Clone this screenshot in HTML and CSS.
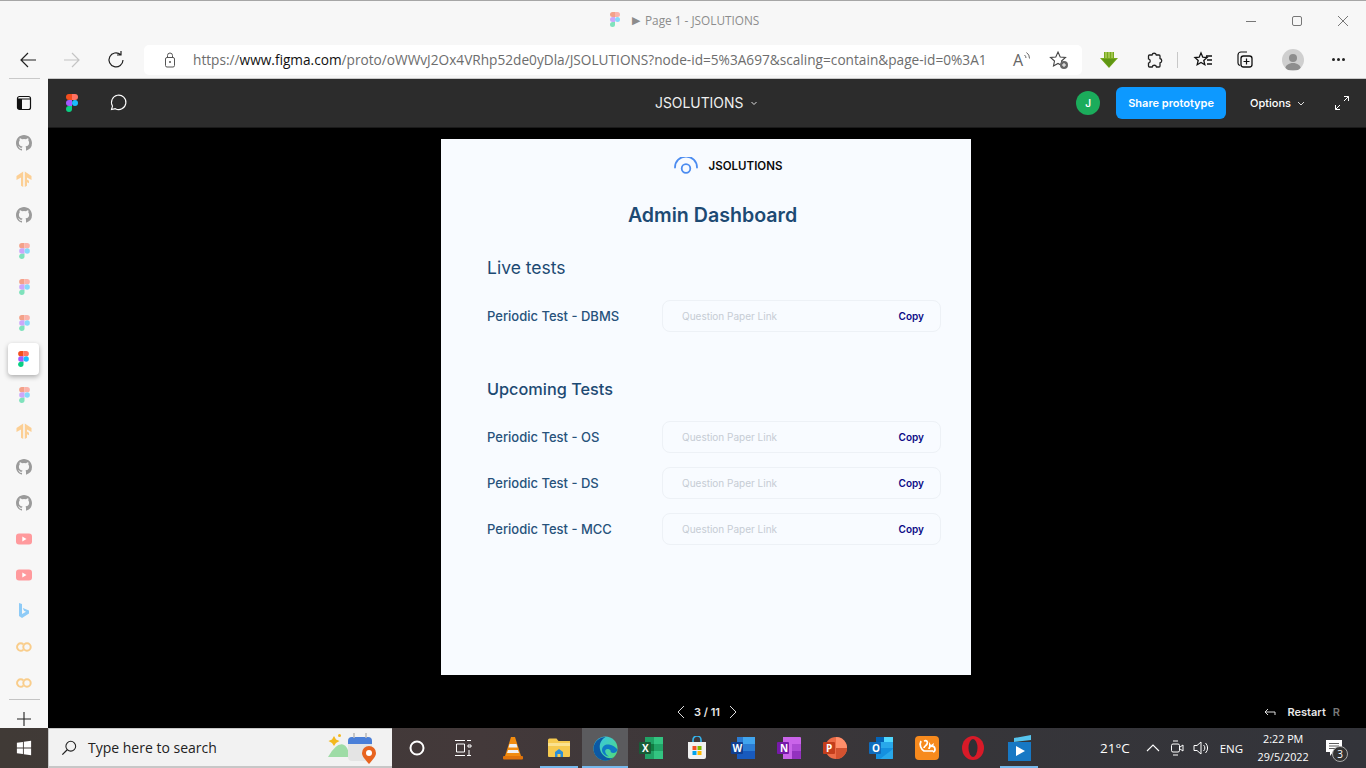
FILE: index.html
```html
<!DOCTYPE html>
<html lang="en">
<head>
    <meta charset="UTF-8">
    <title>Page 1 - JSOLUTIONS</title>
    <link rel="stylesheet" href="styles.css">
</head>
<body>
<svg class="defs" width="0" height="0">
    <symbol id="gh" viewBox="0 0 16 16"><path fill="#9b9b9b" d="M8 0C3.58 0 0 3.58 0 8c0 3.54 2.29 6.53 5.47 7.59.4.07.55-.17.55-.38v-1.34c-2.23.48-2.7-1.07-2.7-1.07-.36-.92-.89-1.17-.89-1.17-.73-.5.05-.49.05-.49.8.06 1.23.83 1.23.83.71 1.22 1.87.87 2.33.66.07-.52.28-.87.51-1.07-1.78-.2-3.64-.89-3.64-3.95 0-.87.31-1.59.82-2.15-.08-.2-.36-1.02.08-2.12 0 0 .67-.21 2.2.82a7.6 7.6 0 0 1 4 0c1.53-1.04 2.2-.82 2.2-.82.44 1.1.16 1.92.08 2.12.51.56.82 1.27.82 2.15 0 3.07-1.87 3.75-3.65 3.95.29.25.54.73.54 1.48v2.2c0 .21.15.46.55.38A8 8 0 0 0 16 8c0-4.42-3.58-8-8-8z"/></symbol>
    <symbol id="tf" viewBox="0 0 16 16"><path fill="#fccf94" d="M7.200 .500V16L5 14.800V6.400L.500 9V5zM8.800 .500V16l2.200-1.200v-3.600l2 1.100V9.700l-2-1.100V6.400L15.500 9V5z"/></symbol>
    <symbol id="figma" viewBox="0 0 12 18">
        <path fill="#f24e1e" d="M3 0h3v6H3a3 3 0 0 1 0-6z"/>
        <path fill="#ff7262" d="M6 0h3a3 3 0 0 1 0 6H6z"/>
        <path fill="#a259ff" d="M3 6h3v6H3a3 3 0 0 1 0-6z"/>
        <circle fill="#1abcfe" cx="9" cy="9" r="3"/>
        <path fill="#0acf83" d="M3 12h3v3a3 3 0 1 1-3-3z"/>
    </symbol>
    <symbol id="yt" viewBox="0 0 16 12"><rect width="16" height="11" y=".5" rx="3" fill="#ff9a9d"/><path fill="#fff" d="M6.300 3.500l4.200 2.500-4.200 2.500z"/></symbol>
    <symbol id="cc" viewBox="0 0 16 10"><path fill="none" stroke="#f9cd8b" stroke-width="2" d="M7.300 2.300a3.700 3.700 0 1 0 0 5.400"/><circle cx="11" cy="5" r="3.700" fill="none" stroke="#f9cd8b" stroke-width="2"/></symbol>
</svg>

<div class="screen">
    <div class="titlebar">
        <div class="tab-title">
            <svg class="tab-favicon" width="10" height="15"><use href="#figma"/></svg>
            <span class="play">▶</span>
            <span>Page 1 - JSOLUTIONS</span>
        </div>
        <div class="window-btns">
            <svg width="14" height="14" viewBox="0 0 14 14"><path d="M2 7.500h10" stroke="#777" fill="none"/></svg>
            <svg width="14" height="14" viewBox="0 0 14 14"><rect x="2.500" y="2.500" width="9" height="9" rx="1.500" stroke="#777" fill="none"/></svg>
            <svg width="14" height="14" viewBox="0 0 14 14"><path d="M2 2l10 10M12 2L2 12" stroke="#777" fill="none"/></svg>
        </div>
    </div>

    <div class="toolbar">
        <div class="nav-btns">
            <svg width="20" height="20" viewBox="0 0 20 20"><path d="M18 10H3M10 3l-7 7 7 7" fill="none" stroke="#222" stroke-width="1.200"/></svg>
            <svg width="20" height="20" viewBox="0 0 20 20"><path d="M2 10h15M10 3l7 7-7 7" fill="none" stroke="#c4c4c4" stroke-width="1.200"/></svg>
            <svg width="20" height="20" viewBox="0 0 20 20"><path d="M14.500 4.500A7 7 0 1 0 17 10M15 1v4h-4" fill="none" stroke="#222" stroke-width="1.200"/></svg>
        </div>
        <div class="addressbar">
            <svg width="14" height="16" viewBox="0 0 14 16"><rect x="2.500" y="5.500" width="9" height="9.500" rx="1.500" fill="none" stroke="#555"/><path d="M4.500 5.500V3.500a2.500 2.500 0 0 1 5 0v2" fill="none" stroke="#555"/><circle cx="7" cy="10" r="1" fill="#555"/></svg>
            <span class="url"><span class="url-dim">https://</span>www.figma.com<span class="url-dim">/proto/oWWvJ2Ox4VRhp52de0yDla/JSOLUTIONS?node-id=5%3A697&amp;scaling=contain&amp;page-id=0%3A1</span></span>
            <div class="address-icons">
                <div class="read-aloud">
                    <span class="read-a">A</span>
                    <svg width="7" height="10" viewBox="0 0 7 10"><path d="M.5 3a4 4 0 0 1 1.500 3M2.500 .5a7 7 0 0 1 3 6" fill="none" stroke="#666"/></svg>
                </div>
                <svg width="20" height="20" viewBox="0 0 20 20"><path d="M9 2l2.200 5 5.300.5-4 3.500 1 5-4.500-2.600L4.500 16l1-5-4-3.500L6.800 7z" fill="none" stroke="#444" stroke-width="1.100"/><circle cx="15" cy="15" r="4" fill="#666"/><path d="M15 13v4M13 15h4" stroke="#fff"/></svg>
            </div>
        </div>
        <div class="ext-icons">
            <svg width="18" height="18" viewBox="0 0 18 18"><path d="M4 1h10v6h4L9 17 0 7h4z" fill="#77a81f"/><path d="M2 8h14L9 16z" fill="#5f9613"/><path d="M6 1v6M9 1v6M12 1v6" stroke="#c9e07a"/></svg>
            <svg class="ext-puzzle" width="18" height="18" viewBox="0 0 18 18"><path d="M4.500 4H7a2.200 2.200 0 0 1 4.300 0H14a1 1 0 0 1 1 1v2.500a2.200 2.200 0 0 1 0 4.300V15a1 1 0 0 1-1 1h-2.500a2.200 2.200 0 0 0-4.300 0H4.500a1 1 0 0 1-1-1v-2.800a2.200 2.200 0 0 0 0-4.300V5a1 1 0 0 1 1-1z" fill="none" stroke="#222" stroke-width="1.300"/></svg>
            <span class="ext-sep"></span>
            <svg class="ext-fav" width="20" height="20" viewBox="0 0 20 20"><path d="M8 3l1.800 4.200 4.200.4-3.200 2.800 1 4.300L8 12.400l-3.800 2.300 1-4.300L2 7.600l4.200-.4zM13 6h6M14 10h5M14 14h5" fill="none" stroke="#111" stroke-width="1.300"/></svg>
            <svg class="ext-coll" width="20" height="20" viewBox="0 0 20 20"><path d="M5 15.500C3.500 15 3 14 3 13V5a3 3 0 0 1 3-3h6" fill="none" stroke="#111" stroke-width="1.200"/><rect x="6" y="6" width="11" height="11" rx="2.500" fill="none" stroke="#111" stroke-width="1.300"/><path d="M11.500 8.500v6M8.500 11.500h6" stroke="#111" stroke-width="1.200"/></svg>
            <span class="avatar"><svg width="22" height="22" viewBox="0 0 22 22"><circle cx="11" cy="9" r="4" fill="#8e8e8e"/><path d="M3 21c0-5 4-7 8-7s8 2 8 7z" fill="#8e8e8e"/></svg></span>
            <span class="more"><i></i><i></i><i></i></span>
        </div>
    </div>

    <div class="browser-body">
        <aside class="sidebar">
            <div class="side-top">
                <svg width="16" height="16" viewBox="0 0 16 16"><rect x="1.500" y="1.500" width="13" height="13" rx="2" fill="none" stroke="#111" stroke-width="1.200"/><path d="M1.500 4h13" stroke="#111"/><rect x="2" y="4" width="4" height="10" fill="#111"/></svg>
            </div>
            <div class="side-list">
                <div class="side-item"><svg width="16" height="16"><use href="#gh"/></svg></div>
                <div class="side-item"><svg width="16" height="16"><use href="#tf"/></svg></div>
                <div class="side-item"><svg width="16" height="16"><use href="#gh"/></svg></div>
                <div class="side-item faded"><svg width="11" height="16"><use href="#figma"/></svg></div>
                <div class="side-item faded"><svg width="11" height="16"><use href="#figma"/></svg></div>
                <div class="side-item faded"><svg width="11" height="16"><use href="#figma"/></svg></div>
                <div class="side-item active"><svg width="11" height="16"><use href="#figma"/></svg></div>
                <div class="side-item faded"><svg width="11" height="16"><use href="#figma"/></svg></div>
                <div class="side-item"><svg width="16" height="16"><use href="#tf"/></svg></div>
                <div class="side-item"><svg width="16" height="16"><use href="#gh"/></svg></div>
                <div class="side-item"><svg width="16" height="16"><use href="#gh"/></svg></div>
                <div class="side-item"><svg width="16" height="12"><use href="#yt"/></svg></div>
                <div class="side-item"><svg width="16" height="12"><use href="#yt"/></svg></div>
                <div class="side-item"><svg width="12" height="16" viewBox="0 0 12 16"><path d="M1 0l3 1v10l4-2.300-2-1L4.800 5 11 7.500v3L4 15l-3-2z" fill="#8ecbf7"/></svg></div>
                <div class="side-item"><svg width="16" height="10"><use href="#cc"/></svg></div>
                <div class="side-item"><svg width="16" height="10"><use href="#cc"/></svg></div>
            </div>
            <div class="side-bottom">
                <svg width="14" height="14" viewBox="0 0 14 14"><path d="M7 0v14M0 7h14" stroke="#222" stroke-width="1.100"/></svg>
            </div>
        </aside>

        <main class="viewer">
            <header class="figma-bar">
                <div class="bar-left">
                    <svg width="12" height="18"><use href="#figma"/></svg>
                    <svg width="20" height="20" viewBox="0 0 20 20"><path d="M3.500 16.500l1-3.500a7.200 7.200 0 1 1 2.800 2.700z" fill="none" stroke="#fff" stroke-width="1.100"/></svg>
                </div>
                <div class="bar-title">JSOLUTIONS <svg class="chev" width="8" height="8" viewBox="0 0 8 8"><path d="M1.500 3L4 5.500 6.500 3" fill="none" stroke="#ddd"/></svg></div>
                <div class="bar-right">
                    <span class="user-dot">J</span>
                    <button class="share-btn">Share prototype</button>
                    <span class="options">Options <svg class="chev" width="8" height="8" viewBox="0 0 8 8"><path d="M1 3l3 3 3-3" fill="none" stroke="#ddd"/></svg></span>
                    <svg width="16" height="16" viewBox="0 0 16 16"><path d="M10 1.500h4.500V6M14.500 1.500L10 6M6 14.500H1.500V10M1.500 14.500L6 10" fill="none" stroke="#fff"/></svg>
                </div>
            </header>

            <div class="stage">
                <section class="frame">
                    <div class="brand">
                        <svg width="26" height="18" viewBox="0 0 26 18"><path d="M2 10.500a11 11 0 0 1 22 0" fill="none" stroke="#4c8cf0" stroke-width="1.800" stroke-linecap="round"/><circle cx="13" cy="11.500" r="4.300" fill="none" stroke="#4c8cf0" stroke-width="1.800"/></svg>
                        <span>JSOLUTIONS</span>
                    </div>
                    <h1 class="frame-title">Admin Dashboard</h1>

                    <h2 class="group-title">Live tests</h2>
                    <div class="test-row">
                        <span class="test-name">Periodic Test - DBMS</span>
                        <div class="link-box"><span class="link-hint">Question Paper Link</span><span class="copy">Copy</span></div>
                    </div>

                    <h2 class="group-title upcoming">Upcoming Tests</h2>
                    <div class="test-list">
                        <div class="test-row">
                            <span class="test-name">Periodic Test - OS</span>
                            <div class="link-box"><span class="link-hint">Question Paper Link</span><span class="copy">Copy</span></div>
                        </div>
                        <div class="test-row">
                            <span class="test-name">Periodic Test - DS</span>
                            <div class="link-box"><span class="link-hint">Question Paper Link</span><span class="copy">Copy</span></div>
                        </div>
                        <div class="test-row">
                            <span class="test-name">Periodic Test - MCC</span>
                            <div class="link-box"><span class="link-hint">Question Paper Link</span><span class="copy">Copy</span></div>
                        </div>
                    </div>
                </section>
            </div>

            <footer class="viewer-foot">
                <div class="pager">
                    <svg width="10" height="14" viewBox="0 0 10 14"><path d="M8 1L2 7l6 6" fill="none" stroke="#ddd"/></svg>
                    <span>3 / 11</span>
                    <svg width="10" height="14" viewBox="0 0 10 14"><path d="M2 1l6 6-6 6" fill="none" stroke="#ddd"/></svg>
                </div>
                <div class="restart">
                    <svg width="12" height="10" viewBox="0 0 12 10"><path d="M11 8V5H1.500M4 2L1 5l3 3" fill="none" stroke="#ddd"/></svg>
                    <span>Restart</span>
                    <span class="key">R</span>
                </div>
            </footer>
        </main>
    </div>

    <div class="taskbar">
        <div class="start">
            <svg width="16" height="16" viewBox="0 0 18 18"><path fill="#fff" d="M1 3.200l6.800-1v6.300H1zM8.800 2l8.200-1.200v7.700H8.800zM1 9.500h6.800v6.300l-6.800-1zM8.800 9.500H17v7.700L8.800 16z"/></svg>
        </div>
        <div class="searchbox">
            <svg width="16" height="16" viewBox="0 0 18 18"><circle cx="11" cy="7" r="5.500" fill="none" stroke="#222" stroke-width="1.200"/><path d="M7 11L1.500 16.500" stroke="#222" stroke-width="1.400"/></svg>
            <span class="search-text">Type here to search</span>
            <svg class="search-art" width="50" height="32" viewBox="0 0 50 32">
                <path d="M1 25Q9 11 16 12.500q5 1.500 7 12.500z" fill="#9edca6"/>
                <path d="M7 4l2 3.500 3.500 1.500-3.500 2L7 14 5 11 1.500 9 5 7.500z" fill="#f3b81f"/>
                <circle cx="12.500" cy="3.500" r="1.500" fill="#f3b81f"/>
                <rect x="21" y="5" width="24" height="24" rx="4" fill="#e4e4e4"/>
                <path d="M21 9a4 4 0 0 1 4-4h16a4 4 0 0 1 4 4v3H21z" fill="#4a7fd8"/>
                <path d="M27 1v5M39 1v5" stroke="#b9b9b9" stroke-width="1.500"/>
                <path d="M42 32c-4.500-5-7-8-7-11a7 7 0 0 1 14 0c0 3-2.500 6-7 11z" fill="#e8641f"/>
                <circle cx="42" cy="21" r="3" fill="#fff"/>
            </svg>
        </div>
        <div class="task-apps">
            <div class="task-app"><svg width="18" height="18" viewBox="0 0 18 18"><circle cx="9" cy="9" r="6.500" fill="none" stroke="#fff" stroke-width="2"/></svg></div>
            <div class="task-app"><svg width="18" height="18" viewBox="0 0 18 18"><path d="M1 1.500h10M1 16.500h10M2.500 5h8v8h-8zM13 1.500h4M13 16.500h4M14 6h3v2h-3zM15 11v5" fill="none" stroke="#fff"/></svg></div>
            <div class="task-app vlc"><svg width="22" height="24" viewBox="0 0 22 24"><path d="M9 1h4l6 19H3z" fill="#f28c0f"/><path d="M7.500 8h7l1 3.500h-9zM6 14h10l1 3H5z" fill="#f0f0f0"/><rect x="1" y="20" width="20" height="3.500" rx="1" fill="#e2740a"/></svg></div>
            <div class="task-app running"><svg width="24" height="22" viewBox="0 0 24 22"><path d="M1 3a1.500 1.500 0 0 1 1.500-1.500h7l2 2.500H23v15a1 1 0 0 1-1 1H2a1 1 0 0 1-1-1z" fill="#f6ca4f"/><path d="M1 6h22v3H1z" fill="#fbe28f"/><path d="M8 20v-5l4-3 4 3v5h-2.500v-3h-3v3z" fill="#2b8fd8"/></svg></div>
            <div class="task-app running current"><svg width="25" height="25" viewBox="0 0 25 25"><defs><linearGradient id="edgeA" x1="0" y1="0" x2="1" y2="1"><stop offset="0" stop-color="#35c1f1"/><stop offset="1" stop-color="#54de74"/></linearGradient></defs><circle cx="12.500" cy="12.500" r="12" fill="url(#edgeA)"/><path d="M.5 12.500C1 5 7 1 12.500 1 9 3 5 8 7.500 15c2 5 8 9 13 6.500A12 12 0 0 1 .5 12.500z" fill="#0c59a4"/><path d="M9 14c0-4 3.500-6 7-5.500 4 .5 7 3 8.500 5-.5 2-2 3.500-4 3.500-2.500 0-3-1-3-2.500-1-1.500-4-2-5-.5-1 1.500.5 5 3.500 6.500-3.500 0-7-3-7-6.500z" fill="#0f7ac6"/></svg></div>
            <div class="task-app"><svg width="24" height="22" viewBox="0 0 24 22"><path d="M6 0h17a1 1 0 0 1 1 1v20a1 1 0 0 1-1 1H6z" fill="#21a366"/><path d="M15 0h9v7h-9zM15 14h9v8h-9z" fill="#33c481"/><path d="M6 7h9v7H6z" fill="#107c41"/><rect y="5" width="12" height="12" rx="1" fill="#185c37"/><text x="3" y="15" class="app-letter">X</text></svg></div>
            <div class="task-app"><svg width="20" height="24" viewBox="0 0 20 24"><path d="M6 7V4a4 4 0 0 1 8 0v3" fill="none" stroke="#35b3ec" stroke-width="1.600"/><path d="M1 6h18v15a2 2 0 0 1-2 2H3a2 2 0 0 1-2-2z" fill="#f1f1f1"/><rect x="5.500" y="10" width="4" height="4" fill="#f25022"/><rect x="10.500" y="10" width="4" height="4" fill="#7fba00"/><rect x="5.500" y="15" width="4" height="4" fill="#00a4ef"/><rect x="10.500" y="15" width="4" height="4" fill="#ffb900"/></svg></div>
            <div class="task-app"><svg width="24" height="22" viewBox="0 0 24 22"><path d="M6 0h17a1 1 0 0 1 1 1v20a1 1 0 0 1-1 1H6z" fill="#2b7cd3"/><path d="M12 0h12v7H12z" fill="#41a5ee"/><path d="M6 14h18v7a1 1 0 0 1-1 1H6z" fill="#185abd"/><rect y="5" width="12" height="12" rx="1" fill="#103f91"/><text x="1.500" y="15" class="app-letter">W</text></svg></div>
            <div class="task-app"><svg width="24" height="22" viewBox="0 0 24 22"><path d="M6 0h17a1 1 0 0 1 1 1v20a1 1 0 0 1-1 1H6z" fill="#ca64ea"/><path d="M15 7h9v7h-9z" fill="#ae4bd5"/><path d="M15 14h9v7a1 1 0 0 1-1 1h-8z" fill="#9332bf"/><rect y="5" width="12" height="12" rx="1" fill="#7719aa"/><text x="3" y="15" class="app-letter">N</text></svg></div>
            <div class="task-app"><svg width="24" height="24" viewBox="0 0 24 24"><circle cx="13" cy="12" r="11" fill="#ed6c47"/><path d="M13 1a11 11 0 0 1 11 11H13z" fill="#ff8f6b"/><path d="M13 12h11a11 11 0 0 1-11 11z" fill="#d35230"/><rect y="6" width="12" height="12" rx="1" fill="#c43e1c"/><text x="3" y="16" class="app-letter">P</text></svg></div>
            <div class="task-app"><svg width="24" height="22" viewBox="0 0 24 22"><path d="M7 0h16a1 1 0 0 1 1 1v10H7z" fill="#28a8ea"/><path d="M7 0h8v5H7z" fill="#0364b8"/><path d="M15 0h9v5h-9z" fill="#50d9ff"/><path d="M7 11h17v10a1 1 0 0 1-1 1H7z" fill="#1490df"/><path d="M11 22l13-10v9a1 1 0 0 1-1 1z" fill="#28a8ea"/><rect y="5" width="12" height="12" rx="1" fill="#0f6cbd"/><text x="3" y="15" class="app-letter">O</text></svg></div>
            <div class="task-app"><svg width="24" height="24" viewBox="0 0 24 24"><rect width="24" height="24" rx="4" fill="#f78a1d"/><path d="M6 5c-2 4 0 8 3 10h9M9 5c3-1 4 1 3 3-1 2-3 2-3 4M14 13a3 3 0 1 1 4 3" fill="none" stroke="#fff" stroke-width="1.700"/><path d="M14 6l2 3 3-2-1 4-4 0z" fill="#fff"/></svg></div>
            <div class="task-app"><svg width="24" height="24" viewBox="0 0 24 24"><ellipse cx="12" cy="12" rx="11" ry="12" fill="#d81a28"/><ellipse cx="12" cy="12" rx="4.500" ry="9" fill="#2f3035"/></svg></div>
            <div class="task-app running"><svg width="24" height="26" viewBox="0 0 24 26"><path d="M7 3L24 0v5L7 7z" fill="#56c4ee"/><path d="M1 7h23v19H1z" fill="#1778c4"/><path d="M9 11l9 5-9 5z" fill="#fff"/></svg></div>
        </div>
        <div class="tray">
            <span class="temp">21°C</span>
            <svg class="tray-chevron" width="14" height="10" viewBox="0 0 14 10"><path d="M1 8l6-6 6 6" fill="none" stroke="#fff" stroke-width="1.100"/></svg>
            <svg class="tray-camera" width="16" height="18" viewBox="0 0 16 18"><rect x="1.500" y="5" width="8" height="8" rx="1.500" fill="none" stroke="#fff"/><path d="M10 8l3-2v6l-3-2M3 2h5M3 16h5" fill="none" stroke="#fff"/></svg>
            <svg class="tray-sound" width="18" height="16" viewBox="0 0 18 16"><path d="M1 5.500h3L8 2v12l-4-3.500H1zM10.500 5a4 4 0 0 1 0 6M12.500 3a7 7 0 0 1 0 10" fill="none" stroke="#fff"/></svg>
            <span class="lang">ENG</span>
            <div class="clock"><span>2:22 PM</span><span>29/5/2022</span></div>
            <div class="notify">
                <svg width="18" height="16" viewBox="0 0 18 16"><path d="M1 0h16v12H8l-3 4v-4H1z" fill="#fff"/><path d="M4 3.500h10M4 6h10M4 8.500h7" stroke="#333" stroke-width=".8"/></svg>
                <span class="notify-badge">3</span>
            </div>
        </div>
    </div>
</div>
</body>
</html>
```

FILE: styles.css
```css
* {
    box-sizing: border-box;
}
html, body {
    margin: 0;
    height: 100%;
    overflow: hidden;
}
body {
    font-family: "Open Sans", "Noto Sans", sans-serif;
}
svg {
    display: block;
    flex: none;
}
.defs {
    position: absolute;
}
.screen {
    width: 1366px;
    height: 768px;
    display: flex;
    flex-direction: column;
    background-color: #f7f7f7;
}

/* browser chrome */
.titlebar {
    height: 40px;
    flex: none;
    border-top: 1px solid #a6a6a6;
    display: flex;
    align-items: center;
}
.tab-title {
    margin-left: 610px;
    margin-bottom: 2px;
    display: flex;
    align-items: center;
    gap: 8px;
    font-size: 11.8px;
    color: #8c8c8c;
}
.tab-favicon {
    opacity: .5;
}
.play {
    font-size: 11px;
    margin: 0 -3px 0 4px;
}
.window-btns {
    margin-left: auto;
    margin-right: 16px;
    display: flex;
    gap: 32px;
}
.toolbar {
    height: 39px;
    flex: none;
    display: flex;
    align-items: center;
}
.nav-btns {
    width: 144px;
    padding-left: 18px;
    display: flex;
    gap: 24px;
    flex: none;
}
.addressbar {
    width: 938px;
    height: 30px;
    background-color: #fff;
    border-radius: 5px;
    display: flex;
    align-items: center;
    padding-left: 19px;
    flex: none;
}
.url {
    margin-left: 16px;
    font-size: 13.66px;
    color: #111;
    white-space: nowrap;
}
.url-dim {
    color: #6d6d6d;
}
.read-aloud {
    display: flex;
    align-items: flex-start;
    gap: 1px;
}
.read-a {
    font-size: 16px;
    line-height: 20px;
    color: #666;
}
.read-aloud svg {
    margin-top: 2px;
}
.address-icons {
    margin-left: auto;
    margin-right: 13px;
    display: flex;
    align-items: center;
    gap: 18px;
}
.ext-icons {
    flex: none;
    display: flex;
    align-items: center;
    margin-left: 18px;
}
.ext-puzzle {
    margin-left: 27px;
}
.ext-sep {
    width: 1px;
    height: 16px;
    background-color: #c8c8c8;
    margin-left: 14px;
}
.ext-fav {
    margin-left: 15px;
}
.ext-coll {
    margin-left: 22px;
}
.avatar {
    width: 22px;
    height: 22px;
    border-radius: 50%;
    background-color: #cfcfcf;
    margin-left: 27px;
    overflow: hidden;
}
.more {
    display: flex;
    gap: 2px;
    margin-left: 28px;
}
.more i {
    width: 3px;
    height: 3px;
    border-radius: 50%;
    background-color: #222;
}

.browser-body {
    flex: 1;
    min-height: 0;
    display: flex;
    margin-top: -1px;
}

/* vertical tabs */
.sidebar {
    width: 48px;
    flex: none;
    display: flex;
    flex-direction: column;
    align-items: center;
}
.side-top {
    width: 31px;
    height: 47px;
    border-top: 1px solid #c9c9c9;
    padding-top: 2px;
    display: flex;
    align-items: center;
    justify-content: center;
    flex: none;
}
.side-list {
    display: flex;
    flex-direction: column;
    align-items: center;
}
.side-item {
    width: 32px;
    height: 36px;
    display: flex;
    align-items: center;
    justify-content: center;
}
.faded svg {
    opacity: .5;
}
.side-item.active {
    background-color: #fff;
    border-radius: 4px;
    width: 31px;
    height: 32px;
    margin: 2px 1px 2px 0;
    box-shadow: 0 2px 5px rgba(0, 0, 0, .3);
}
.side-bottom {
    width: 31px;
    margin-top: -2px;
    border-top: 1px solid #c4c4c4;
    padding-top: 12px;
    display: flex;
    justify-content: center;
}

/* figma viewer */
.viewer {
    flex: 1;
    min-width: 0;
    display: flex;
    flex-direction: column;
    background-color: #000;
    border-top: 1px solid #c9c9c9;
    color: #fff;
    font-family: Inter, sans-serif;
}
.figma-bar {
    height: 49px;
    flex: none;
    background-color: #2c2c2c;
    border-bottom: 1px solid #1a1a1a;
    display: flex;
    align-items: center;
    position: relative;
}
.bar-left {
    display: flex;
    align-items: center;
    gap: 30px;
    margin-left: 18px;
}
.bar-title {
    position: absolute;
    left: 607px;
    top: 0;
    height: 48px;
    display: flex;
    align-items: center;
    gap: 7px;
    font-size: 13.9px;
    color: #f0f0f0;
}
.bar-right {
    margin-left: auto;
    display: flex;
    align-items: center;
}
.user-dot {
    width: 24px;
    height: 24px;
    border-radius: 50%;
    background-color: #1bac5b;
    font-size: 10px;
    font-weight: 600;
    display: flex;
    align-items: center;
    justify-content: center;
}
.share-btn {
    width: 110px;
    height: 32px;
    margin-left: 16px;
    border: none;
    border-radius: 6px;
    background-color: #0d99ff;
    color: #fff;
    font-family: Inter, sans-serif;
    font-size: 11px;
    font-weight: 600;
}
.options {
    margin-left: 24px;
    display: flex;
    align-items: center;
    gap: 6px;
    font-size: 11px;
    font-weight: 500;
}
.bar-right > svg {
    margin-left: 29px;
    margin-right: 16px;
}
.stage {
    flex: 1;
    min-height: 0;
    padding: 11px 0 0 393px;
}

/* prototype frame */
.frame {
    width: 530px;
    height: 536px;
    background-color: #f8fbff;
    padding: 15px 30px 0 46px;
    display: flex;
    flex-direction: column;
}
.brand {
    display: flex;
    align-items: center;
    gap: 10px;
    align-self: center;
    height: 24px;
    margin-left: 27px;
    font-size: 11.5px;
    font-weight: 600;
    color: #0a0a0a;
}
.frame-title {
    margin: 23px 0 0;
    padding-right: 3px;
    text-align: center;
    font-size: 19.6px;
    font-weight: 600;
    line-height: 28px;
    color: #1d4a73;
}
.group-title {
    margin: 27px 0 0;
    font-size: 17.5px;
    font-weight: 400;
    line-height: 24px;
    color: #1d4a73;
}
.group-title.upcoming {
    margin-top: 45px;
    font-size: 16.3px;
    font-weight: 500;
}
.test-row {
    display: flex;
    align-items: center;
    margin-top: 20px;
}
.test-list {
    display: flex;
    flex-direction: column;
    gap: 14px;
    margin-top: 20px;
}
.test-list .test-row {
    margin-top: 0;
}
.test-name {
    width: 175px;
    flex: none;
    font-size: 13px;
    font-weight: 500;
    color: #27527b;
}
.link-box {
    flex: 1;
    height: 32px;
    border: 1px solid #edf1f6;
    border-radius: 8px;
    padding: 0 16px 0 19px;
    display: flex;
    align-items: center;
    justify-content: space-between;
    font-size: 10px;
}
.link-hint {
    color: #c6ccd4;
}
.copy {
    font-weight: 600;
    color: #0b0b86;
}

.viewer-foot {
    height: 32px;
    flex: none;
    display: flex;
    align-items: center;
    padding-left: 628px;
    font-size: 11px;
    font-weight: 600;
    color: #e8e8e8;
}
.pager {
    display: flex;
    align-items: center;
    gap: 8px;
}
.restart {
    margin-left: auto;
    margin-right: 26px;
    display: flex;
    align-items: center;
    gap: 12px;
}
.key {
    color: #777;
    margin-left: -5px;
}

/* windows taskbar */
.taskbar {
    height: 40px;
    flex: none;
    display: flex;
    align-items: center;
    background: linear-gradient(90deg, #403a36 0%, #43393a 35%, #363539 70%, #33343a 100%);
    color: #fff;
}
.start {
    width: 48px;
    flex: none;
    display: flex;
    justify-content: center;
}
.searchbox {
    width: 344px;
    height: 40px;
    flex: none;
    background-color: #f2f2f2;
    border: 1px solid #c7c7c7;
    border-width: 1px 0 2px 1px;
    display: flex;
    align-items: center;
    padding-left: 12px;
    color: #222;
}
.search-text {
    margin-left: 11px;
    font-size: 14px;
}
.search-art {
    margin-left: auto;
    margin-right: 15px;
}
.task-apps {
    display: flex;
    flex: none;
    margin-left: 2px;
}
.task-app {
    width: 46px;
    height: 40px;
    display: flex;
    align-items: center;
    justify-content: center;
    position: relative;
}
.task-app.vlc {
    margin-left: 4px;
}
.task-app.running::after {
    content: "";
    position: absolute;
    left: 4px;
    right: 4px;
    bottom: 0;
    height: 2px;
    background-color: #76b9ed;
}
.task-app.current {
    background-color: #5b5b5e;
}
.task-app.current::after {
    left: 0;
    right: 0;
}
.app-letter {
    font-family: "Open Sans", sans-serif;
    font-size: 10px;
    font-weight: 700;
    fill: #fff;
}
.tray {
    flex: 1;
    display: flex;
    align-items: center;
}
.temp {
    margin-left: 58px;
    font-size: 13.5px;
}
.tray-chevron {
    margin-left: 16px;
}
.tray-camera {
    margin-left: 10px;
}
.tray-sound {
    margin-left: 7px;
}
.lang {
    margin-left: 9px;
    font-size: 11.5px;
}
.clock {
    margin-left: 8px;
    width: 64px;
    display: flex;
    flex-direction: column;
    align-items: center;
    font-size: 10.8px;
    line-height: 18px;
}
.notify {
    position: relative;
    margin-left: 10px;
}
.notify-badge {
    position: absolute;
    left: 7px;
    top: 6px;
    width: 16px;
    height: 16px;
    border-radius: 50%;
    border: 1px solid #aaa;
    background-color: #333;
    font-size: 10px;
    line-height: 14px;
    text-align: center;
}
```
